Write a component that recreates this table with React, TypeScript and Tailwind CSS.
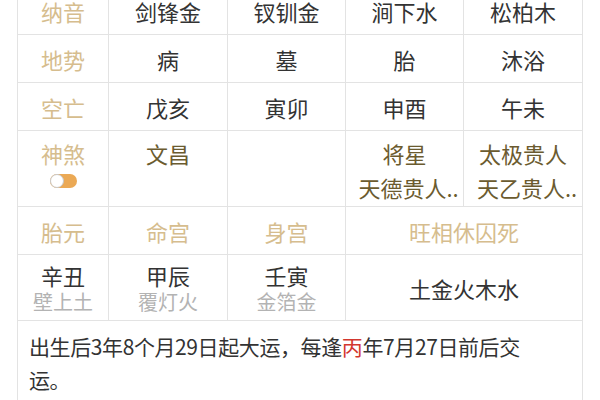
import React from "react";

const cellB = "border-r border-b border-[#e3e3e3] flex items-center justify-center";
const label = "text-[#d6bd8e]";
const main = "text-[#333333]";

function Toggle() {
  return (
    <div className="relative w-[27px] h-[14px] rounded-full bg-[#eba955] mt-[10px]">
      <div className="absolute left-0 top-0 w-[14px] h-[14px] rounded-full bg-white border border-[#c9c9c9]" />
    </div>
  );
}

export default function App() {
  const rows: string[][] = [
    ["纳音", "剑锋金", "钗钏金", "涧下水", "松柏木"],
    ["地势", "病", "墓", "胎", "沐浴"],
    ["空亡", "戊亥", "寅卯", "申酉", "午未"],
  ];
  return (
    <div className="w-[600px] h-[400px] overflow-hidden bg-white font-['Noto_Sans_CJK_SC','Noto_Sans',sans-serif]">
      <div className="ml-[17px] w-[566px] mt-[-13px] border-l border-[#e3e3e3]">
        <div className="grid grid-cols-[91px_119px_118px_118px_119px] text-[22px] leading-none">
          {rows.map((r, i) => (
            <React.Fragment key={i}>
              {r.map((c, j) => (
                <div key={j} className={`${cellB} h-[48px] ${j === 0 ? label : main}`}>
                  {c}
                </div>
              ))}
            </React.Fragment>
          ))}
          {/* 神煞 row */}
          <div className={`border-r border-b border-[#e3e3e3] h-[76px] flex flex-col items-center pt-[11px] ${label}`}>
            <span>神煞</span>
            <Toggle />
          </div>
          <div className="border-r border-b border-[#e3e3e3] h-[76px] flex flex-col items-center pt-[11px] text-[#6b5b2f]">
            <span>文昌</span>
          </div>
          <div className="border-r border-b border-[#e3e3e3] h-[76px]" />
          <div className="border-r border-b border-[#e3e3e3] h-[76px] flex flex-col items-center pt-[11px] gap-[12px] text-[#6b5b2f] overflow-hidden whitespace-nowrap">
            <span>将星</span>
            <span className="pl-[8px]">天德贵人..</span>
          </div>
          <div className="border-r border-b border-[#e3e3e3] h-[76px] flex flex-col items-center pt-[11px] gap-[12px] text-[#6b5b2f] overflow-hidden whitespace-nowrap">
            <span>太极贵人</span>
            <span className="pl-[8px]">天乙贵人..</span>
          </div>
          {/* 胎元 row */}
          <div className={`${cellB} h-[48px] ${label}`}>胎元</div>
          <div className={`${cellB} h-[48px] ${label}`}>命宫</div>
          <div className={`${cellB} h-[48px] ${label}`}>身宫</div>
          <div className={`${cellB} h-[48px] col-span-2 ${label}`}>旺相休囚死</div>
          {/* 干支 row */}
          {[
            ["辛丑", "壁上土"],
            ["甲辰", "覆灯火"],
            ["壬寅", "金箔金"],
          ].map(([a, b], k) => (
            <div key={k} className="border-r border-b border-[#e3e3e3] h-[66px] flex flex-col items-center pt-[9px] gap-[6px]">
              <span className={main}>{a}</span>
              <span className="text-[20px] text-[#b3b3b3]">{b}</span>
            </div>
          ))}
          <div className={`${cellB} h-[66px] col-span-2 ${main}`}>土金火木水</div>
        </div>
        <div className="border-r border-[#e3e3e3] h-[120px] pl-[11px] pr-[11px] pt-[9px] text-[21px] tracking-[-0.4px] leading-[33px] text-[#333333]">
          出生后3年8个月29日起大运，每逢<span className="text-[#d2372f]">丙</span>年7月27日前后交
          <br />
          运。
        </div>
      </div>
    </div>
  );
}
